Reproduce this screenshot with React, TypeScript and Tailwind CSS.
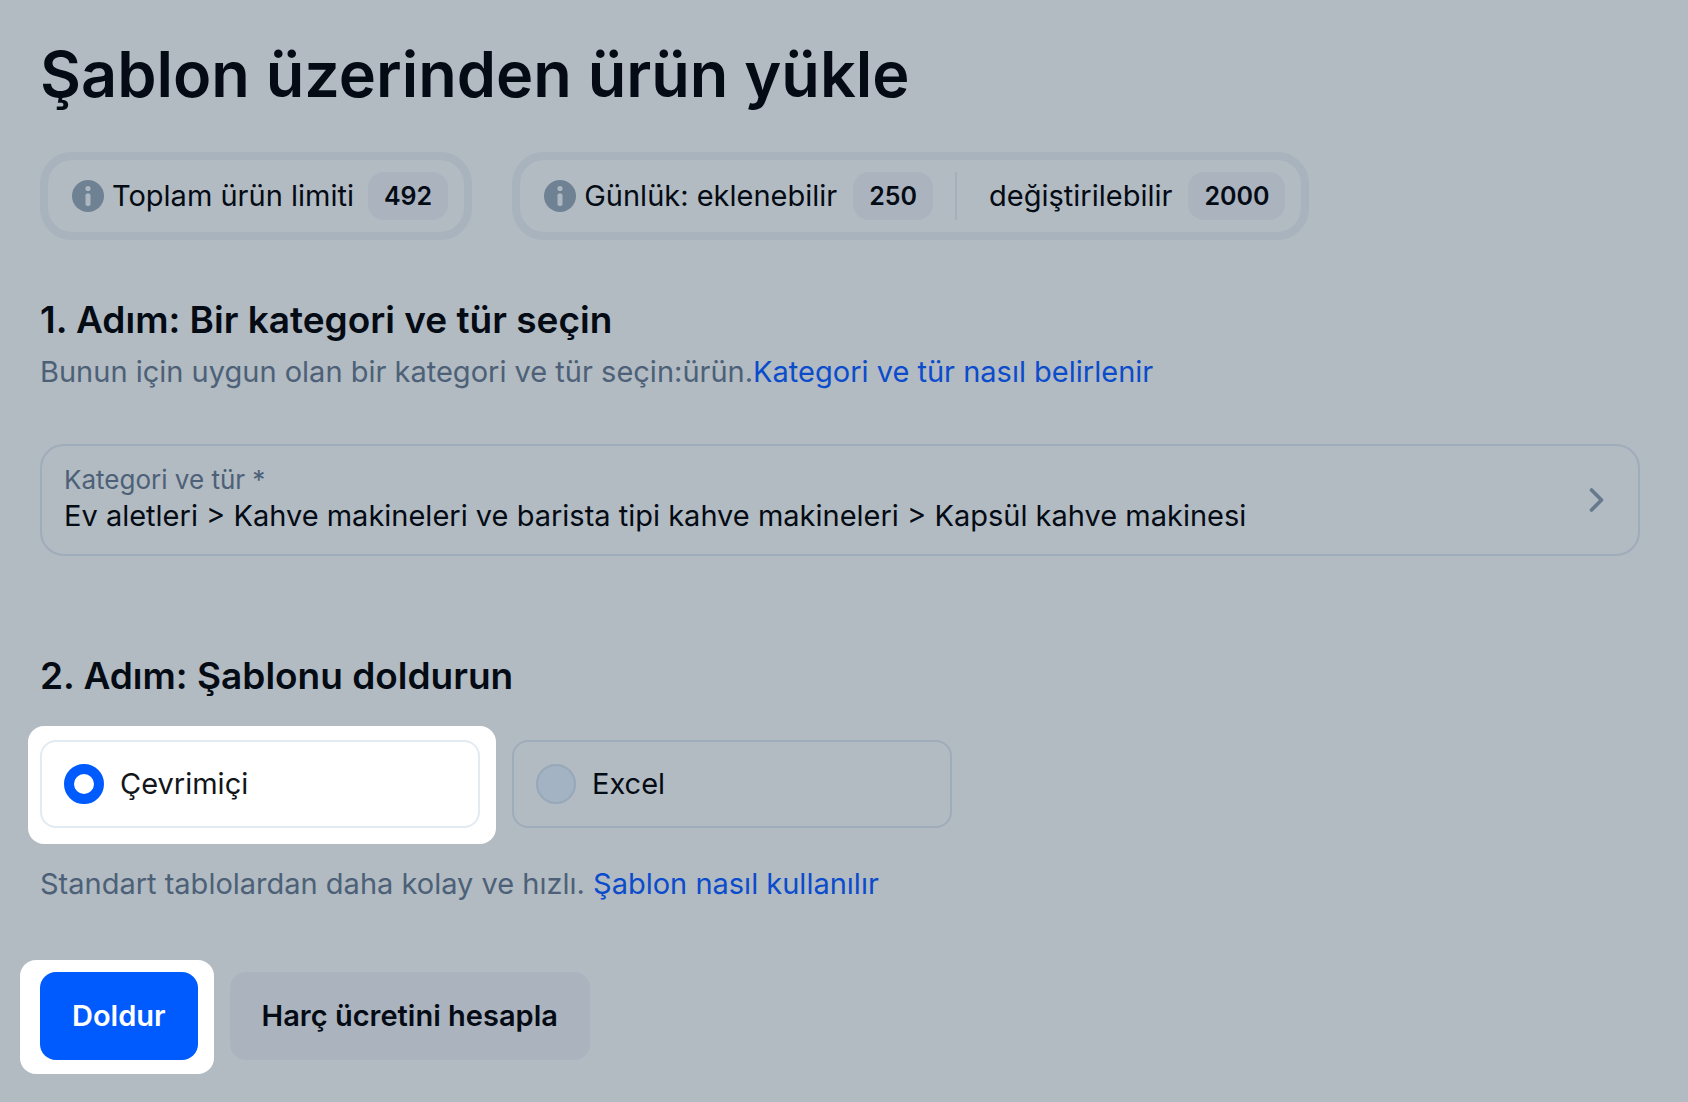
import React, { useState } from 'react';

type Mode = 'online' | 'excel';

function InfoIcon() {
  return (
    <svg width="32" height="32" viewBox="0 0 32 32" className="shrink-0" aria-hidden="true">
      <circle cx="16" cy="16" r="16" fill="#6f8294" />
      <circle cx="16" cy="8.5" r="2.6" fill="#adb7c1" />
      <rect x="13.5" y="13.5" width="5" height="12.5" rx="1.8" fill="#adb7c1" />
    </svg>
  );
}

function Badge({ value }: { value: number }) {
  return (
    <span className="flex h-12 items-center rounded-2xl bg-[#abb3bf] px-4 text-[25px] font-semibold">
      {value}
    </span>
  );
}

interface RadioCardProps {
  value: Mode;
  label: string;
  mode: Mode;
  onChange: (mode: Mode) => void;
}

function RadioCard({ value, label, mode, onChange }: RadioCardProps) {
  const checked = mode === value;

  return (
    <label
      className={`flex h-22 w-110 cursor-pointer items-center gap-4 rounded-2xl border-2 px-[22px] ${
        checked ? 'border-[#e2eaf2] text-[#12151a]' : 'border-[#9facb9]'
      }`}
    >
      <input
        type="radio"
        name="mode"
        value={value}
        checked={checked}
        onChange={() => onChange(value)}
        className="size-10 shrink-0 appearance-none rounded-full border-2 border-[#96a8b9] bg-[#a3b3c3] checked:border-[10px] checked:border-[#005bff] checked:bg-white"
      />
      {label}
    </label>
  );
}

export default function App() {
  const [mode, setMode] = useState<Mode>('online');

  return (
    <main className="min-h-screen bg-[#b2bac2] pt-[34px] pr-12 pb-10 pl-10 font-['Inter','Liberation_Sans',sans-serif] text-[29px] leading-10 text-[#040b14]">
      <h1 className="text-[63px] leading-20 font-semibold">Şablon üzerinden ürün yükle</h1>

      {/* Limits */}
      <div className="mt-[38px] flex flex-wrap gap-10">
        <div className="flex h-22 items-center rounded-[32px] border-8 border-[#a9b3be] pr-4 pl-6">
          <InfoIcon />
          <span className="mr-3.5 ml-2">Toplam ürün limiti</span>
          <Badge value={492} />
        </div>
        <div className="flex h-22 items-center rounded-[32px] border-8 border-[#a9b3be] pr-4 pl-6">
          <InfoIcon />
          <span className="mr-4 ml-2">Günlük: eklenebilir</span>
          <Badge value={250} />
          <span className="mr-8 ml-[22px] h-12 w-0.5 bg-[#a5b0bc]" />
          <span className="mr-4">değiştirilebilir</span>
          <Badge value={2000} />
        </div>
      </div>

      {/* Step 1 */}
      <section className="mt-14">
        <h2 className="text-[37px] leading-12 font-semibold">1. Adım: Bir kategori ve tür seçin</h2>
        <p className="mt-2 text-[#4c6177]">
          Bunun için uygun olan bir kategori ve tür seçin:ürün.
          <a href="#category" className="text-[#0a4ccc]">Kategori ve tür nasıl belirlenir</a>
        </p>
        <button
          type="button"
          className="mt-13 flex h-28 w-full items-center justify-between rounded-3xl border-2 border-[#9facb9] pr-[26px] pl-[22px] text-left"
        >
          <span>
            <span className="block text-[26px] leading-8 text-[#4c6177]">Kategori ve tür *</span>
            <span className="block">
              Ev aletleri &gt; Kahve makineleri ve barista tipi kahve makineleri &gt; Kapsül kahve makinesi
            </span>
          </span>
          <svg width="32" height="32" viewBox="0 0 32 32" fill="none" aria-hidden="true">
            <path d="M11.5 6 21.5 16 11.5 26" stroke="#66798d" strokeWidth="3.6" strokeLinecap="round" strokeLinejoin="round" />
          </svg>
        </button>
      </section>

      {/* Step 2 */}
      <section className="mt-24">
        <h2 className="text-[37px] leading-12 font-semibold">2. Adım: Şablonu doldurun</h2>
        <div className="mt-[26px] -ml-3 flex items-start gap-4">
          <div className="rounded-2xl bg-white pt-3.5 pr-4 pb-4 pl-3">
            <RadioCard value="online" label="Çevrimiçi" mode={mode} onChange={setMode} />
          </div>
          <div className="pt-3.5">
            <RadioCard value="excel" label="Excel" mode={mode} onChange={setMode} />
          </div>
        </div>
        <p className="mt-5 text-[#4c6177]">
          Standart tablolardan daha kolay ve hızlı.{' '}
          <a href="#template" className="text-[#0a4ccc]">Şablon nasıl kullanılır</a>
        </p>
      </section>

      {/* Actions */}
      <div className="mt-14 -ml-5 flex items-start gap-4">
        <div className="rounded-2xl bg-white pt-3 pr-4 pb-3.5 pl-5">
          <button type="button" className="h-22 rounded-2xl bg-[#005bff] px-8 font-semibold text-white">
            Doldur
          </button>
        </div>
        <div className="pt-3">
          <button type="button" className="h-22 rounded-2xl bg-[#abb3bf] px-8 font-semibold">
            Harç ücretini hesapla
          </button>
        </div>
      </div>
    </main>
  );
}
